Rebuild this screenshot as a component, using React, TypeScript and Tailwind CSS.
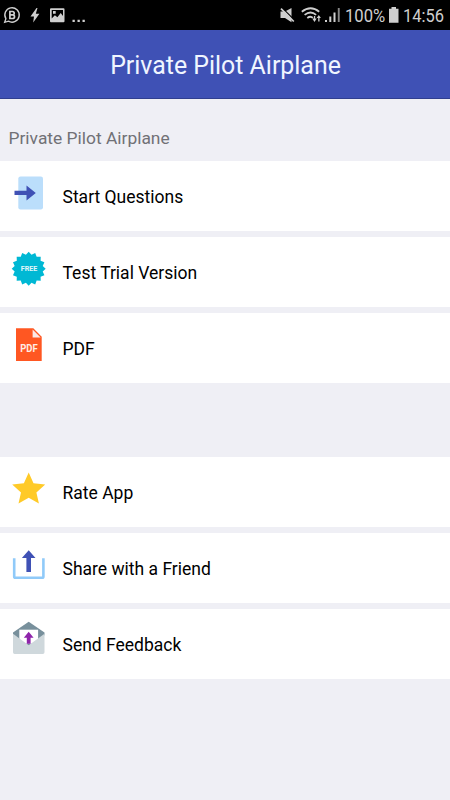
import type { ReactNode } from "react";

// 16-pointed seal used behind the FREE label
const SEAL_POINTS = Array.from({ length: 32 }, (_, i) => {
  const radius = i % 2 === 0 ? 17 : 14.3;
  const angle = (i * Math.PI) / 16 - Math.PI / 2;
  return `${(19.7 + radius * Math.cos(angle)).toFixed(2)},${(19.7 + radius * Math.sin(angle)).toFixed(2)}`;
}).join(" ");

function Icon({ children }: { children: ReactNode }) {
  return (
    <svg viewBox="0 0 40 40" className="size-10 shrink-0" aria-hidden="true">
      {children}
    </svg>
  );
}

function StartIcon() {
  return (
    <Icon>
      <rect x="9.3" y="3.4" width="24.7" height="33" rx="2.2" fill="#bbdefb" />
      <path d="M5.5 17.7h12v-5.3l9.3 7.5-9.3 7.5V22h-12z" fill="#3f51b5" />
    </Icon>
  );
}

function FreeIcon() {
  return (
    <Icon>
      <polygon points={SEAL_POINTS} fill="#00b8d4" />
      <text
        x="20"
        y="22.2"
        textAnchor="middle"
        textLength="16.5"
        lengthAdjust="spacingAndGlyphs"
        fill="#e0f7fa"
        className="font-['Roboto',sans-serif] text-[7.5px] font-bold"
      >
        FREE
      </text>
    </Icon>
  );
}

function PdfIcon() {
  return (
    <Icon>
      <path d="M7 3.3h17.3l8.4 8.4V36H7z" fill="#ff5722" />
      <path d="M23.6 4.4v8h8z" fill="#fbe9e7" />
      <text
        x="20"
        y="26.7"
        textAnchor="middle"
        textLength="17.5"
        lengthAdjust="spacingAndGlyphs"
        fill="#ffebe4"
        className="font-['Roboto',sans-serif] text-[10.5px] font-bold"
      >
        PDF
      </text>
    </Icon>
  );
}

function StarIcon() {
  return (
    <Icon>
      <path
        d="M19.7 3.5l4.8 10.8 11.7 1.2-8.8 7.9 2.5 11-10.2-5.7-10.2 5.7 2.5-11-8.8-7.9 11.7-1.2z"
        fill="#ffca28"
      />
    </Icon>
  );
}

function ShareIcon() {
  return (
    <Icon>
      <path d="M5.2 13.2v18.3q0 1.3 1.3 1.3h26.6q1.3 0 1.3-1.3V13.2" fill="none" stroke="#90caf9" strokeWidth="2.6" />
      <path d="M19.7 5.3l6.8 7.7h-4.5v14h-4.6V13h-4.5z" fill="#3f51b5" />
    </Icon>
  );
}

function FeedbackIcon() {
  return (
    <Icon>
      <path d="M4 11.5L19.7.7l15.8 10.8v2.8L19.7 25 4 14.3z" fill="#78909c" />
      <path d="M10.3 8.7h18.8v14H10.3z" fill="#fff" />
      <path d="M4 12.7l15.7 11.6 15.8-11.6v18.6q0 1.7-1.7 1.7H5.7Q4 33 4 31.3z" fill="#cfd8dc" />
      <path d="M19.7 10.8l4.9 5.9h-3v6h-3.8v-6h-3z" fill="#8e24aa" />
    </Icon>
  );
}

function Row({ icon, label }: { icon: ReactNode; label: string }) {
  return (
    <li className="flex h-[70px] items-center bg-white pl-[9px] text-[17.5px] text-black">
      <span className="-mt-1.5">{icon}</span>
      <span className="ml-[13.5px] pt-[3px]">{label}</span>
    </li>
  );
}

function StatusBar() {
  return (
    <div className="flex h-[30px] items-center bg-black text-[#cfcfcf]">
      <svg viewBox="0 0 90 30" className="h-[30px] w-[90px]" aria-hidden="true">
        <path d="M4.7 22.3l1.2-3.6a7.2 7.2 0 1 1 2.6 2.5z" fill="none" stroke="currentColor" strokeWidth="1.4" />
        <path
          d="M9.9 11.5h2.6q1.7 0 1.7 1.7t-1.7 1.7q2 0 2 1.8t-2 1.8H9.9zM9.9 14.9h2.6"
          fill="none"
          stroke="currentColor"
          strokeWidth="1.7"
        />
        <path d="M36.5 8l-6 8.5h3.5l-.8 6 6.2-8.8h-3.6l1.7-5.7z" fill="currentColor" />
        <path
          fillRule="evenodd"
          d="M51 8.3h12.5q1 0 1 1v12q0 1-1 1H51q-1 0-1-1v-12q0-1 1-1zM51.7 10v8.5l3.2-3.2 2.5 2 3.3-4.3 2.3 3V10zM53 11h2.7v2.7H53z"
          fill="currentColor"
        />
        <path d="M72.5 19.7h2.3V22h-2.3zM77.5 19.7h2.3V22h-2.3zM82.5 19.7h2.3V22h-2.3z" fill="currentColor" />
      </svg>
      <svg viewBox="275 0 67 30" className="ml-auto h-[30px] w-[67px]" aria-hidden="true">
        <path d="M279.5 11.5h4.5l6.5-3.5v14.3l-6.5-4.3h-4.5z" fill="currentColor" />
        <path d="M281 7.7l12.8 12.8" stroke="#000" strokeWidth="1.1" />
        <path d="M280 8.7l12.8 12.8" stroke="currentColor" strokeWidth="1.7" />
        <path
          d="M300.8 11.7q8.9-7 17.4 0M303.6 14.9q6-4.7 11.5 0M306.3 17.9q3.3-2.4 5.5 0"
          fill="none"
          stroke="currentColor"
          strokeWidth="1.8"
        />
        <path d="M311.3 18.5h4.4l-2.2 3.5zM312.9 16h1.3v4h-1.3zM315.7 18l2.1-3 2.1 3zM317.2 17h1.3v4.5h-1.3z" fill="currentColor" />
        <path d="M324 20h2v2h-2zM328.3 16.5h2V22h-2zM332.5 12.5h2V22h-2z" fill="currentColor" />
        <path d="M336.8 8h1.9v14h-1.9z" fill="#888" />
      </svg>
      <span className="ml-[2px] w-[40px] whitespace-nowrap pt-0.5 text-[18.5px] leading-7">
        <span className="inline-block origin-left scale-x-[0.9]">100%</span>
      </span>
      <svg viewBox="0 0 12 16" className="ml-[3px] h-4 w-3" aria-hidden="true">
        <path d="M3.5 0h4.5v1.7h2.5v14H1v-14h2.5z" fill="currentColor" />
      </svg>
      <span className="ml-[3px] w-[47px] whitespace-nowrap pt-0.5 text-[18.5px] leading-7">
        <span className="inline-block origin-left scale-x-[0.89]">14:56</span>
      </span>
    </div>
  );
}

export default function App() {
  return (
    <div className="min-h-screen bg-[#efeff5] font-['Roboto',sans-serif]">
      <StatusBar />
      <header className="flex h-[69px] items-center justify-center border-b border-[#303f8f] bg-[#3f51b5] pt-1 pl-px text-[24.9px] text-[#f0f5ff]">
        <h1>Private Pilot Airplane</h1>
      </header>
      <main>
        <h2 className="flex h-[62px] items-end pb-2.5 pl-[8.5px] text-[17.4px] text-[#717176]">
          Private Pilot Airplane
        </h2>
        <ul className="flex flex-col gap-1.5">
          <Row icon={<StartIcon />} label="Start Questions" />
          <Row icon={<FreeIcon />} label="Test Trial Version" />
          <Row icon={<PdfIcon />} label="PDF" />
        </ul>
        <ul className="mt-[74px] flex flex-col gap-1.5">
          <Row icon={<StarIcon />} label="Rate App" />
          <Row icon={<ShareIcon />} label="Share with a Friend" />
          <Row icon={<FeedbackIcon />} label="Send Feedback" />
        </ul>
      </main>
    </div>
  );
}
